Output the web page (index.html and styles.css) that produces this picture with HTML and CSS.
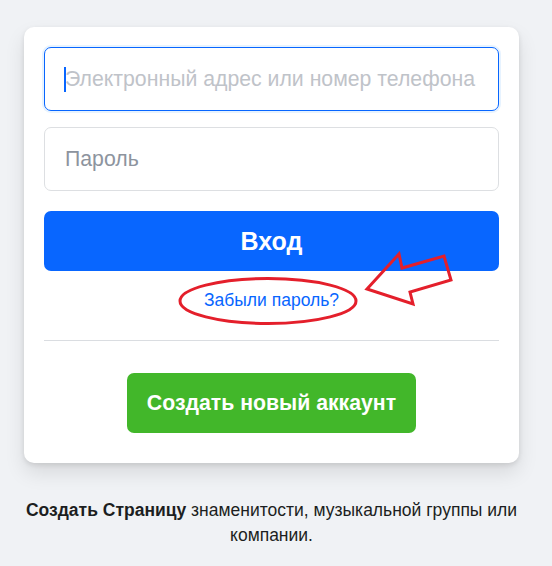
FILE: index.html
```html
<!DOCTYPE html>
<html lang="ru">
<head>
  <meta charset="UTF-8" />
  <meta name="viewport" content="width=device-width, initial-scale=1.0"/>
  <title>Вход</title>
  <link rel="stylesheet" href="styles.css">
</head>
<body>
  <div class="page">
    <div class="card">
      <form class="login-form">
        <div class="field focused">
          <span class="caret"></span>
          <input type="text" name="email" placeholder="Электронный адрес или номер телефона" />
        </div>
        <div class="field">
          <input type="password" name="pass" placeholder="Пароль" />
        </div>
        <button type="submit" class="btn-login">Вход</button>
      </form>
      <div class="forgot">
        <a href="#">Забыли пароль?</a>
      </div>
      <div class="divider"></div>
      <div class="create">
        <a href="#" class="btn-create">Создать новый аккаунт</a>
      </div>

      <!-- annotation drawn over the card -->
      <svg class="markup" width="495" height="436" viewBox="24 27 495 436">
        <ellipse cx="268" cy="301" rx="88" ry="22.5" fill="none" stroke="#e41f2b" stroke-width="3"/>
        <polygon points="367,289 399,254 402,268 444,256 451,280 410,292 413,304" fill="none" stroke="#e41f2b" stroke-width="3" stroke-linejoin="miter"/>
      </svg>
    </div>
    <p class="page-note"><a href="#">Создать Страницу</a> знаменитости, музыкальной группы или компании.</p>
  </div>
</body>
</html>
```

FILE: styles.css
```css
body {
  margin: 0;
  font-family: "Liberation Sans", Arial, sans-serif;
  background: #f0f2f5;
  color: #1c1e21;
}
.page {
  width: 495px;
  padding: 27px 0 0 24px;
}
.card {
  position: relative;
  background: #fff;
  border-radius: 10px;
  box-shadow: 0 2px 5px rgba(0,0,0,0.1), 0 10px 20px rgba(0,0,0,0.1);
  padding: 20px 20px 30px;
}
.login-form {
  display: flex;
  flex-direction: column;
}
.field {
  position: relative;
  margin-bottom: 16px;
}
.field input {
  display: block;
  box-sizing: border-box;
  width: 100%;
  height: 64px;
  padding: 0 20px;
  border: 1px solid #dddfe2;
  border-radius: 7px;
  font-family: inherit;
  font-size: 21.25px;
  color: #1d2129;
  outline: none;
}
.field input::placeholder {
  color: #8d949e;
}
.field.focused input {
  border-color: #0866ff;
  box-shadow: 0 0 0 2px #e7f3ff;
}
.field.focused input::placeholder {
  color: #bfc3c9;
}
.caret {
  position: absolute;
  left: 20px;
  top: 20px;
  width: 2px;
  height: 25px;
  background: #0866ff;
}
.btn-login {
  margin-top: 4px;
  height: 60px;
  border: none;
  border-radius: 7px;
  background: #0866ff;
  color: #fff;
  font-family: inherit;
  font-size: 25px;
  font-weight: bold;
  cursor: pointer;
}
.forgot {
  text-align: center;
  margin-top: 19px;
  line-height: 20px;
}
.forgot a {
  color: #0866ff;
  font-size: 17.5px;
  text-decoration: none;
}
.divider {
  height: 1px;
  background: #dadde1;
  margin: 29px 0 32px;
}
.create {
  display: flex;
  justify-content: center;
}
.btn-create {
  display: flex;
  align-items: center;
  height: 60px;
  padding: 0 20px;
  border-radius: 7px;
  background: #42b72a;
  color: #fff;
  font-size: 21.25px;
  font-weight: bold;
  text-decoration: none;
}
.markup {
  position: absolute;
  left: 0;
  top: 0;
  pointer-events: none;
}
.page-note {
  margin: 35px 0 0;
  text-align: center;
  font-size: 17.5px;
  line-height: 25px;
}
.page-note a {
  color: #1c1e21;
  font-weight: bold;
  text-decoration: none;
}
```
